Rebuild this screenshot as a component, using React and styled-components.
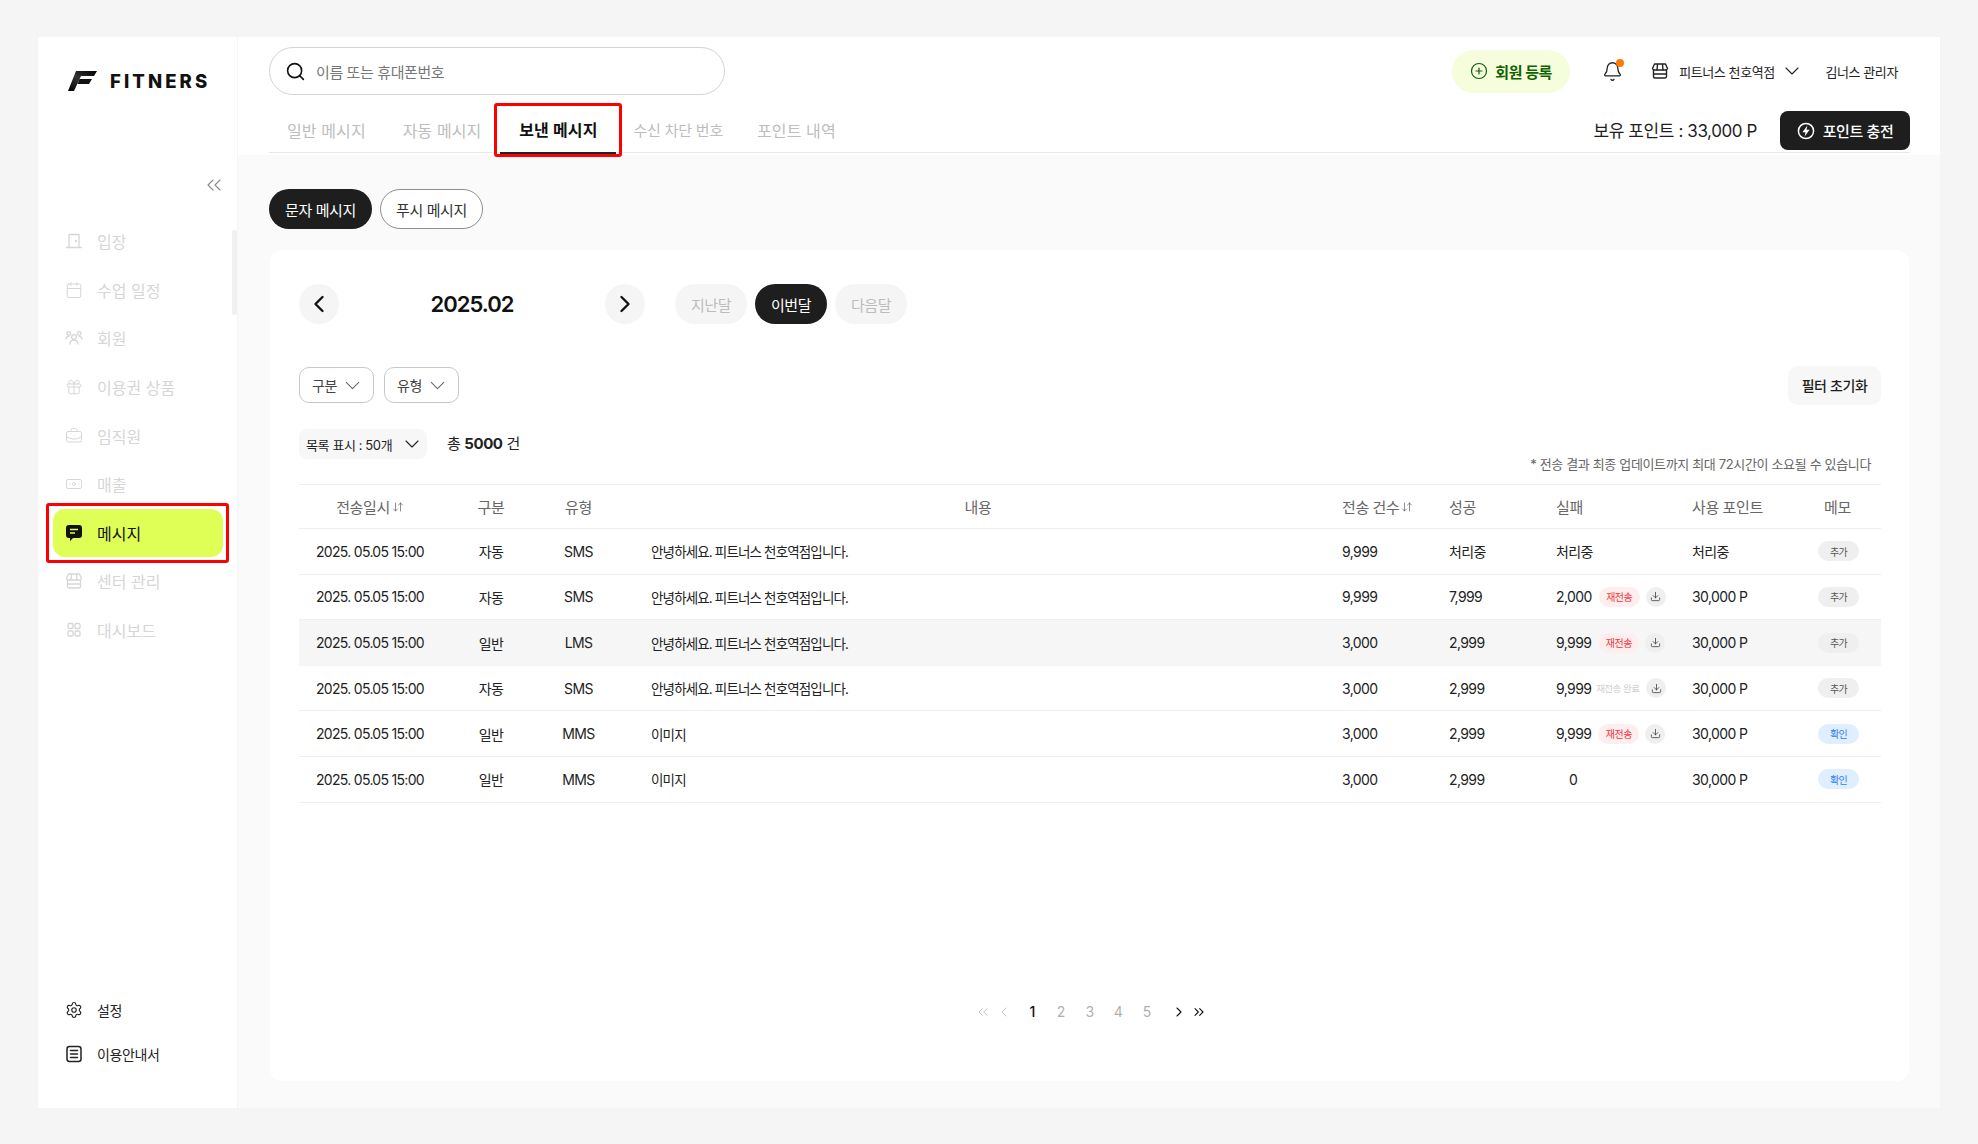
import React from "react";
import styled, { createGlobalStyle } from "styled-components";
import { Search, ChevronLeft, ChevronRight, ChevronDown, ChevronsLeft, ChevronsRight, CirclePlus, Bell, Calendar, Gift, BriefcaseBusiness, Banknote, Settings, Download, ArrowDownUp } from "lucide-react";

const Global = createGlobalStyle`
  html, body { margin: 0; padding: 0; background: #f5f5f5; }
  * { box-sizing: border-box; }
  body { font-family: Inter, "Noto Sans CJK KR", sans-serif; color: #1e1e1e; letter-spacing: -0.4px; }
`;

const Page = styled.div`width: 1978px; height: 1144px; padding: 37px 38px 36px;`;
const Frame = styled.div`display: flex; width: 1902px; height: 1071px; background: #fafafa;`;

const Side = styled.aside`
  position: relative; width: 200px; background: #fff; border-right: 1px solid #f5f5f5;
  display: flex; flex-direction: column; padding: 0 14px 0 15px;
`;
const LogoRow = styled.div`display: flex; align-items: center; gap: 13px; height: 24px; margin: 32px 0 0 15px;`;
const LogoText = styled.span`font-size: 18.5px; font-weight: 800; letter-spacing: 3.1px; color: #111;`;
const Collapse = styled.div`display: flex; justify-content: flex-end; margin-top: 80px; margin-right: -3px; color: #888; height: 24px;`;
const Thumb = styled.div`position: absolute; left: 194px; top: 193px; width: 5px; height: 85px; border-radius: 3px; background: #f0f0f0;`;
const Nav = styled.nav`display: flex; flex-direction: column; margin-top: 20px;`;
const NavItem = styled.div`
  position: relative; display: flex; align-items: center; gap: 14px; height: 48.6px; padding-left: 12px;
  font-size: 16px; font-weight: 400; letter-spacing: 0; color: ${p => (p.$active ? "#111" : "#d6d6d6")};
  &::before { content: ""; display: ${p => (p.$active ? "block" : "none")}; position: absolute; inset: 0; background: #dfff57; border-radius: 12px; }
  & > * { position: relative; }
`;
const RedBox = styled.div`position: absolute !important; border: 3px solid #f00; border-radius: 3px; pointer-events: none; inset: ${p => p.$inset};`;
const SideFoot = styled.div`display: flex; flex-direction: column; gap: 17px; margin-top: auto; padding: 0 0 41px 12px;`;
const FootItem = styled.div`display: flex; align-items: center; gap: 14px; height: 27px; font-size: 14px; color: #222;`;

const Main = styled.main`flex: 1; display: flex; flex-direction: column; min-width: 0;`;
const Head = styled.header`height: 118px; background: #fff; padding: 10px 30px 0 31px;`;
const TopRow = styled.div`display: flex; align-items: center; height: 48px;`;
const SearchBox = styled.div`
  width: 456px; height: 48px; border: 1.5px solid #d4d4d4; border-radius: 24px; display: flex; align-items: center; gap: 10px;
  padding-left: 15px; font-size: 15px; color: #777;
`;
const Right = styled.div`margin-left: auto; display: flex; align-items: center;`;
const Join = styled.div`
  width: 118px; height: 43px; border-radius: 22px; background: #f6fddc; color: #0e6200; font-size: 15px; font-weight: 700;
  display: flex; align-items: center; justify-content: center; gap: 7px;
`;
const BellWrap = styled.div`position: relative; display: flex; margin-left: 32px; color: #222;`;
const Dot = styled.span`position: absolute; right: -1px; top: -2px; width: 8px; height: 8px; border-radius: 50%; background: #ff7a00;`;
const Branch = styled.div`display: flex; align-items: center; margin-left: 28px; font-size: 13px; color: #222;`;
const BranchName = styled.span`margin: 0 5.5px 0 10px;`;
const Admin = styled.span`margin-left: 21px; font-size: 13px; color: #222; padding-right: 12px;`;
const TabRow = styled.div`display: flex; align-items: flex-start; height: 50px; margin-top: 8px; border-bottom: 1px solid #e8e8e8;`;
const Tab = styled.div`
  position: relative; height: 51px; display: flex; align-items: center; padding: 2px 18px 0; margin-right: 1px;
  font-size: 16px; letter-spacing: 0.1px; font-weight: 400; color: #bdbdbd;
`;
const ActiveTab = styled(Tab)`
  border-bottom: 2px solid #222; padding: 2px 0 0; width: 116px; justify-content: center; margin-right: 0; font-weight: 600; color: #111;
`;
const SmallTab = styled(Tab)`font-size: 15px; letter-spacing: -0.2px; padding: 2px 15px 0 17px;`;
const Balance = styled.div`margin-left: auto; font-size: 17px; color: #1e1e1e; line-height: 20px; padding-top: 18px;`;
const Charge = styled.div`
  margin: 8px 0 0 23px; width: 130px; height: 39px; background: #1e1e1e; color: #fff; border-radius: 8px; font-size: 15px; font-weight: 500;
  display: flex; align-items: center; justify-content: center; gap: 8px;
`;

const Body = styled.div`flex: 1; padding: 34px 31px 27px 31px; display: flex; flex-direction: column;`;
const Pills = styled.div`display: flex; gap: 8px; height: 40px;`;
const Pill = styled.div`
  width: 103px; height: 40px; border-radius: 20px; display: flex; align-items: center; justify-content: center; font-size: 15px;
  background: ${p => (p.$on ? "#1e1e1e" : "#fff")}; color: ${p => (p.$on ? "#fff" : "#333")}; border: ${p => (p.$on ? "none" : "1.5px solid #8e8e8e")};
`;
const Card = styled.section`flex: 1; margin-top: 21px; margin-left: 1px; background: #fff; border-radius: 12px; padding: 34px 28px 0 29px; display: flex; flex-direction: column;`;
const MonthRow = styled.div`display: flex; align-items: center; height: 40px;`;
const RoundBtn = styled.div`width: 40px; height: 40px; border-radius: 50%; background: #f5f5f5; display: flex; align-items: center; justify-content: center; color: #111;`;
const Year = styled.div`width: 266px; text-align: center; font-size: 22px; font-weight: 600; color: #111; letter-spacing: -1px;`;
const MonthBtn = styled.div`
  width: 72px; height: 40px; border-radius: 20px; margin-left: ${p => (p.$first ? "30px" : "8px")}; display: flex; align-items: center; justify-content: center; font-size: 15px;
  background: ${p => (p.$on ? "#1e1e1e" : "#f5f5f5")}; color: ${p => (p.$on ? "#fff" : "#bcbcbc")};
`;
const FilterRow = styled.div`display: flex; align-items: center; gap: 10px; margin-top: 41px; height: 40px;`;
const Filter = styled.div`
  width: 75px; height: 36px; border: 1.5px solid #c8c8c8; border-radius: 10px; display: flex; align-items: center; justify-content: center; gap: 3px; padding-left: 4px; font-size: 14px; color: #444;
`;
const Reset = styled.div`margin-left: auto; width: 93px; height: 39px; background: #f7f7f7; border-radius: 10px; display: flex; align-items: center; justify-content: center; font-size: 14px; font-weight: 500; color: #1e1e1e;`;
const ListRow = styled.div`display: flex; align-items: flex-start; height: 80px; margin-top: 24px; position: relative;`;
const ListSelect = styled.div`width: 128px; height: 30px; background: #f7f7f7; border-radius: 8px; display: flex; align-items: center; justify-content: space-between; padding: 0 3px 0 7px; font-size: 13px; color: #222;`;
const Total = styled.div`margin-left: 20px; height: 30px; line-height: 30px; font-size: 15px; color: #222; b { font-weight: 700; }`;
const Note = styled.div`margin-left: auto; padding: 26px 10px 0 0; font-size: 13px; letter-spacing: -0.35px; color: #666; line-height: 18px;`;

const Table = styled.div`display: flex; flex-direction: column; margin-top: -25px;`;
const cols = "142px 100px 75px 724px 107px 107px 136px 105px 85px";
const HeadRow = styled.div`display: grid; grid-template-columns: ${cols}; height: 45px; align-items: center; border-top: 1px solid #eee; border-bottom: 1px solid #eee; font-size: 15px; color: #666;`;
const Row = styled.div`display: grid; grid-template-columns: ${cols}; height: 45.6px; align-items: center; font-size: 14px; letter-spacing: -0.6px; color: #222; border-bottom: ${p => (p.$hl ? "none" : "1px solid #eee")}; background: ${p => (p.$hl ? "#f6f6f6" : "#fff")};`;
const Cell = styled.div`display: flex; align-items: center; justify-content: ${p => (p.$center ? "center" : "flex-start")}; padding-left: ${p => p.$pad || "0"}; white-space: nowrap;`;
const DateCell = styled(Cell)`letter-spacing: -0.7px;`;
const TextCell = styled(Cell)`font-size: 13.5px; letter-spacing: -0.85px;`;
const SortIcon = styled.span`display: inline-flex; margin-left: 2px; color: #666;`;
const Resend = styled.span`
  width: 41px; height: 20px; border-radius: 10px; margin-left: 7px; background: #ffeeee; color: #f5323c; font-size: 10px; display: inline-flex; align-items: center; justify-content: center; letter-spacing: -0.5px;
`;
const ResendDone = styled.span`width: 45px; margin-left: 4px; color: #cfcfcf; font-size: 9.5px; text-align: center; letter-spacing: -0.5px;`;
const DlBtn = styled.span`width: 20px; height: 20px; border-radius: 50%; margin-left: 6px; background: #efefef; color: #444; display: inline-flex; align-items: center; justify-content: center;`;
const Memo = styled.span`
  width: 41px; height: 20px; margin-left: 2px; border-radius: 10px; font-size: 10px; display: inline-flex; align-items: center; justify-content: center;
  background: ${p => (p.$blue ? "#e0efff" : "#efefef")}; color: ${p => (p.$blue ? "#2b7cf6" : "#555")};
`;
const Pager = styled.div`display: flex; justify-content: center; align-items: center; height: 20px; margin-top: 199px; padding-left: 2px; font-size: 14px;`;
const PageNum = styled.span`width: 28.7px; text-align: center; color: ${p => (p.$on ? "#111" : "#b0b0b0")}; font-weight: ${p => (p.$on ? 500 : 400)}; ${p => p.$on && "margin-left: 3px;"}`;
const PageIcon = styled.span`display: inline-flex; color: ${p => (p.$dark ? "#111" : "#b0b0b0")}; margin: 0 ${p => p.$m || 2}px; ${p => p.$gap && "margin-left: 10px;"}`;

const Ico = ({ size = 18, sw = 1.3, children }) => (
  <svg width={size} height={size} viewBox="0 0 18 18" fill="none" stroke="currentColor" strokeWidth={sw} strokeLinecap="round" strokeLinejoin="round">{children}</svg>
);
const DoorIcon = p => <Ico {...p}><path d="M4 15.5V2.5h10v13M1.5 15.5h15" /><circle cx="11" cy="9" r=".5" fill="currentColor" /></Ico>;
const PeopleIcon = p => (
  <Ico {...p}>
    <circle cx="9" cy="8" r="2.4" /><path d="M4.8 15c.3-2.6 2-3.8 4.2-3.8s3.9 1.2 4.2 3.8" />
    <circle cx="3.8" cy="4.5" r="1.8" /><circle cx="14.2" cy="4.5" r="1.8" />
    <path d="M1 10c.2-1.5 1.2-2.6 2.800-2.600M17 10c-.2-1.5-1.2-2.6-2.800-2.600" />
  </Ico>
);
const StoreIcon = p => (
  <Ico {...p}>
    <path d="M3.5 2h11l2 4.5A1.8 1.8 0 0 1 14.700 8H3.300A1.8 1.8 0 0 1 1.500 6.500z" />
    <path d="M2.500 8v6.500A1.500 1.500 0 0 0 4 16h10a1.500 1.500 0 0 0 1.500-1.500V8M6.500 2.500 6 8M11.500 2.500 12 8M2.500 12h13" />
  </Ico>
);
const GridIcon = p => (
  <Ico {...p}><rect x="3" y="2.5" width="5" height="5" rx="1.2" /><rect x="10" y="2.5" width="5" height="5" rx="1.2" /><rect x="3" y="10" width="5" height="5" rx="1.2" /><rect x="10" y="10" width="5" height="5" rx="1.2" /></Ico>
);
const DocIcon = p => <Ico {...p}><rect x="2" y="1.5" width="14" height="15" rx="2.5" /><path d="M5.5 5.5h7M5.500 9h7M5.500 12.500h7" /></Ico>;
const BoltIcon = () => (
  <svg width="18" height="18" viewBox="0 0 18 18" fill="none">
    <circle cx="9" cy="9" r="7.6" stroke="#fff" strokeWidth="1.5" />
    <path d="M10.4 3.4 5.4 10.2h3.1l-.9 4.400 5-6.800H9.500z" fill="#fff" />
  </svg>
);
const MsgIcon = () => (
  <svg width="18" height="18" viewBox="0 0 18 18">
    <path d="M4 1h10a3 3 0 0 1 3 3v7a3 3 0 0 1-3 3H8l-3 3v-3H4a3 3 0 0 1-3-3V4a3 3 0 0 1 3-3z" fill="#111" />
    <path d="M5 5.5h8M5 9h5" stroke="#dfff57" strokeWidth="1.6" />
  </svg>
);
const Logo = () => (
  <svg width="29" height="20" viewBox="0 0 29 20">
    <defs><linearGradient id="lg" x1="0" x2="1" y1="1" y2="0"><stop offset="0" stopColor="#000" /><stop offset=".5" stopColor="#333" /><stop offset="1" stopColor="#000" /></linearGradient></defs>
    <path d="M8 0h21l-3 5H13L6 20H0z" fill="url(#lg)" />
    <path d="M11.5 8H24l-3 5H9.5z" fill="#111" />
  </svg>
);
const Sort = () => <SortIcon><ArrowDownUp size={12} strokeWidth={1.5} /></SortIcon>;

const CalIcon = p => <Calendar {...p} strokeWidth={1.3} />;
const GiftIcon = p => <Gift {...p} strokeWidth={1.3} />;
const CaseIcon = p => <BriefcaseBusiness {...p} strokeWidth={1.3} />;
const CashIcon = p => <Banknote {...p} strokeWidth={1.3} />;

const NAV = [
  [DoorIcon, "입장"], [CalIcon, "수업 일정"], [PeopleIcon, "회원"], [GiftIcon, "이용권 상품"],
  [CaseIcon, "임직원"], [CashIcon, "매출"], [null, "메시지"], [StoreIcon, "센터 관리"], [GridIcon, "대시보드"],
];
const ROWS = [
  ["자동", "SMS", "안녕하세요. 피트너스 천호역점입니다.", "9,999", "처리중", "처리중", null, "처리중", 0],
  ["자동", "SMS", "안녕하세요. 피트너스 천호역점입니다.", "9,999", "7,999", "2,000", "r", "30,000 P", 0],
  ["일반", "LMS", "안녕하세요. 피트너스 천호역점입니다.", "3,000", "2,999", "9,999", "r", "30,000 P", 0],
  ["자동", "SMS", "안녕하세요. 피트너스 천호역점입니다.", "3,000", "2,999", "9,999", "d", "30,000 P", 0],
  ["일반", "MMS", "이미지", "3,000", "2,999", "9,999", "r", "30,000 P", 1],
  ["일반", "MMS", "이미지", "3,000", "2,999", "0", "z", "30,000 P", 1],
];

export default function App() {
  return (
    <Page>
      <Global />
      <Frame>
        <Side>
          <LogoRow><Logo /><LogoText>FITNERS</LogoText></LogoRow>
          <Collapse><ChevronsLeft size={24} strokeWidth={1.1} /></Collapse>
          <Thumb />
          <Nav>
            {NAV.map(([Ic, label]) => {
              const on = label === "메시지";
              return (
                <NavItem key={label} $active={on}>
                  {on ? <MsgIcon /> : <Ic size={18} />}
                  <span>{label}</span>
                  {on && <RedBox $inset="-6px -6px -6px -7px" />}
                </NavItem>
              );
            })}
          </Nav>
          <SideFoot>
            <FootItem><Settings size={18} strokeWidth={1.5} />설정</FootItem>
            <FootItem><DocIcon size={18} sw={1.5} />이용안내서</FootItem>
          </SideFoot>
        </Side>
        <Main>
          <Head>
            <TopRow>
              <SearchBox><Search size={21} strokeWidth={1.8} color="#111" />이름 또는 휴대폰번호</SearchBox>
              <Right>
                <Join><CirclePlus size={18} strokeWidth={1.6} />회원 등록</Join>
                <BellWrap><Bell size={21} strokeWidth={1.5} /><Dot /></BellWrap>
                <Branch><StoreIcon size={18} sw={1.4} /><BranchName>피트너스 천호역점</BranchName><ChevronDown size={24} strokeWidth={1.1} /></Branch>
                <Admin>김너스 관리자</Admin>
              </Right>
            </TopRow>
            <TabRow>
              <Tab>일반 메시지</Tab>
              <Tab>자동 메시지</Tab>
              <ActiveTab>보낸 메시지<RedBox $inset="0 -6px -5px -6px" /></ActiveTab>
              <SmallTab>수신 차단 번호</SmallTab>
              <Tab>포인트 내역</Tab>
              <Balance>보유 포인트 : 33,000 P</Balance>
              <Charge><BoltIcon />포인트 충전</Charge>
            </TabRow>
          </Head>
          <Body>
            <Pills><Pill $on>문자 메시지</Pill><Pill>푸시 메시지</Pill></Pills>
            <Card>
              <MonthRow>
                <RoundBtn><ChevronLeft size={28} strokeWidth={2} /></RoundBtn>
                <Year>2025.02</Year>
                <RoundBtn><ChevronRight size={28} strokeWidth={2} /></RoundBtn>
                <MonthBtn $first>지난달</MonthBtn>
                <MonthBtn $on>이번달</MonthBtn>
                <MonthBtn>다음달</MonthBtn>
              </MonthRow>
              <FilterRow>
                <Filter>구분<ChevronDown size={25} strokeWidth={1} color="#666" /></Filter>
                <Filter>유형<ChevronDown size={25} strokeWidth={1} color="#666" /></Filter>
                <Reset>필터 초기화</Reset>
              </FilterRow>
              <ListRow>
                <ListSelect>목록 표시 : 50개<ChevronDown size={24} strokeWidth={1.1} /></ListSelect>
                <Total>총 <b>5000</b> 건</Total>
                <Note>* 전송 결과 최종 업데이트까지 최대 72시간이 소요될 수 있습니다</Note>
              </ListRow>
              <Table>
                <HeadRow>
                  <Cell $center>전송일시<Sort /></Cell>
                  <Cell $center>구분</Cell>
                  <Cell $center>유형</Cell>
                  <Cell $center>내용</Cell>
                  <Cell $pad="2px">전송 건수<Sort /></Cell>
                  <Cell $pad="2px">성공</Cell>
                  <Cell $pad="2px">실패</Cell>
                  <Cell $pad="2px">사용 포인트</Cell>
                  <Cell $center>메모</Cell>
                </HeadRow>
                {ROWS.map((r, i) => (
                  <Row key={i} $hl={i === 2}>
                    <DateCell $center>2025. 05.05 15:00</DateCell>
                    <Cell $center>{r[0]}</Cell>
                    <Cell $center>{r[1]}</Cell>
                    <TextCell $pad="35px">{r[2]}</TextCell>
                    <Cell $pad="2px">{r[3]}</Cell>
                    <Cell $pad="2px">{r[4]}</Cell>
                    <Cell $pad={r[6] === "z" ? "15px" : "2px"}>
                      {r[5]}
                      {r[6] === "r" && <Resend>재전송</Resend>}
                      {r[6] === "d" && <ResendDone>재전송 완료</ResendDone>}
                      {(r[6] === "r" || r[6] === "d") && <DlBtn><Download size={11} strokeWidth={1.8} /></DlBtn>}
                    </Cell>
                    <Cell $pad="2px">{r[7]}</Cell>
                    <Cell $center><Memo $blue={r[8] === 1}>{r[8] ? "확인" : "추가"}</Memo></Cell>
                  </Row>
                ))}
              </Table>
              <Pager>
                <PageIcon><ChevronsLeft size={16} strokeWidth={1.2} /></PageIcon>
                <PageIcon $m={3}><ChevronLeft size={16} strokeWidth={1.2} /></PageIcon>
                <PageNum $on>1</PageNum>
                <PageNum>2</PageNum><PageNum>3</PageNum><PageNum>4</PageNum><PageNum>5</PageNum>
                <PageIcon $dark $gap><ChevronRight size={16} strokeWidth={1.6} /></PageIcon>
                <PageIcon $dark><ChevronsRight size={16} strokeWidth={1.6} /></PageIcon>
              </Pager>
            </Card>
          </Body>
        </Main>
      </Frame>
    </Page>
  );
}
